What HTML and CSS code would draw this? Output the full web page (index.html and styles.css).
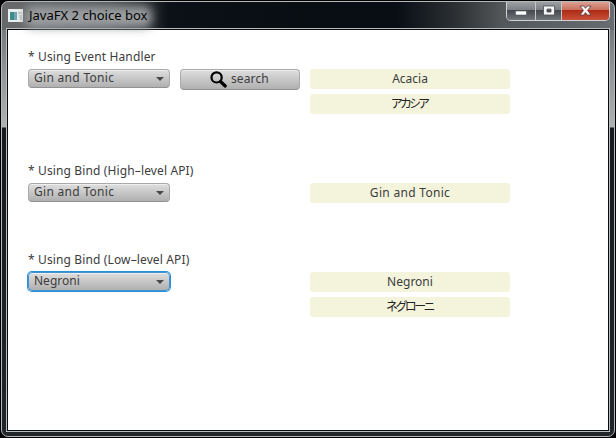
FILE: index.html
```html
<!DOCTYPE html>
<html lang="en">
<head>
<meta charset="utf-8">
<title>JavaFX 2 choice box</title>
<link rel="stylesheet" href="styles.css">
</head>
<body>
<div class="window">
  <header class="titlebar">
    <svg class="app-icon" width="15" height="13" viewBox="0 0 15 13"><path fill="#e9eeee" d="M0 0h15v13H0z"/><path fill="#438b8b" d="M2 3h6v8H2z"/><path fill="#72a7ac" d="M6 3h3v8H6z"/><path fill="#c8cdd0" d="M10 3h4v2h-4zM11 6h3v5h-2z"/></svg>
    <span class="title">JavaFX 2 choice box</span>
    <div class="controls">
      <span class="control minimize"><svg width="12" height="6" viewBox="0 0 12 6"><path d="M.5 1h11v4H.5z" fill="#fff" stroke="#53565a" stroke-width=".6"/></svg></span>
      <span class="control maximize"><svg width="12" height="11" viewBox="0 0 12 11"><path d="M.5 1h11v9H.5zM4 4v3h4V4z" fill="#f5f5f5" fill-rule="evenodd" stroke="#4b4e52" stroke-width=".8"/></svg></span>
      <span class="control close"><svg width="13" height="11" viewBox="0 0 13 11"><path d="M1 1h3.7l1.8 2.3L8.3 1H12L8.6 5.4 12 10H8.3L6.5 7.6 4.7 10H1l3.4-4.6z" fill="#f7f7f7" stroke="#5a3b3c" stroke-width=".8"/></svg></span>
    </div>
  </header>
  <main class="client">
    <section class="group first">
      <div class="label">* Using Event Handler</div>
      <div class="row">
        <div class="choice"><span class="gin">Gin and Tonic</span><i class="arrow"></i></div>
        <div class="search"><svg width="17" height="17" viewBox="0 0 17 17" fill="none" stroke="#000"><circle cx="6.6" cy="6.4" r="5.1" stroke-width="2.2"/><path d="m10.5 10.5 4.7 4.5" stroke-width="3.2" stroke-linecap="round"/></svg><span>search</span></div>
        <div class="results"><div class="result"><span>Acacia</span></div><div class="result kana"><span>アカシア</span></div></div>
      </div>
    </section>
    <section class="group second">
      <div class="label">* Using Bind (High–level API)</div>
      <div class="row">
        <div class="choice"><span class="gin">Gin and Tonic</span><i class="arrow"></i></div>
        <div class="results"><div class="result"><span class="gin">Gin and Tonic</span></div></div>
      </div>
    </section>
    <section class="group third">
      <div class="label">* Using Bind (Low–level API)</div>
      <div class="row">
        <div class="choice focused"><span>Negroni</span><i class="arrow"></i></div>
        <div class="results"><div class="result"><span>Negroni</span></div><div class="result kana long"><span>ネグローニ</span></div></div>
      </div>
    </section>
  </main>
</div>
</body>
</html>
```
FILE: styles.css
```css
* { box-sizing: border-box; }
body { margin: 0; padding: 1px; width: 616px; height: 438px; overflow: hidden; background: #000; font: 12px/18px "Noto Sans", "Noto Sans CJK JP", sans-serif; color: #3c3c3c; }
svg { display: block; flex: none; }
.window {
  width: 614px; height: 436px; padding: 0 4px 4px; border: 1px solid #b4b9bc; border-radius: 7px;
  background:
    linear-gradient(90deg, #66686a 0, #66686a 20px, #4b4e51 110px, #252a2e 150px, #0c1117 166px, #080e12 300px, #090e15 395px, #2d3134 455px, #53575a 500px, #686c70 612px) 0 0 / 100% 28px no-repeat,
    linear-gradient(#65686b 0, #929597 70px, #b0b1b1 125px, #171b1f 126px, #20262a 100%);
}
.titlebar { display: flex; height: 26px; padding-left: 2px; }
.app-icon { margin-top: 7px; }
.title { position: relative; z-index: 0; margin: 4px 0 0 6px; color: #000; font-size: 13px; letter-spacing: .01px; white-space: nowrap; }
.title::before { content: ""; position: absolute; z-index: -1; inset: 0 -5px 0 -4px; border-radius: 8px; background: #9a9d9f; filter: blur(5px); }
.controls { display: flex; margin-left: auto; margin-right: 0; width: 104px; height: 19px; border: 1px solid #d0d2d4; border-top: 0; border-radius: 0 0 5px 5px; overflow: hidden; }
.control { display: flex; align-items: center; justify-content: center; width: 29px; border-right: 1px solid #c5c8ca; background: linear-gradient(#9da0a3, #7b7f83 45%, #45494e 47%, #707579); }
.control svg { margin-top: -2px; }
.control.maximize { width: 26px; }
.control.minimize svg { margin-top: 3px; }
.control.close { flex: 1; border: 0; background: linear-gradient(#dda094, #c66e5b 45%, #ae2b15 47%, #c9513b); }
.client { width: 604px; height: 404px; border: 1px solid #b9bdc0; outline: 1px solid #080b0e; outline-offset: -2px; background: #fff; padding: 19px 20px 0 21px; }
.label { height: 21px; white-space: nowrap; letter-spacing: .13px; }
.row { display: flex; align-items: flex-start; }
.choice { display: flex; flex: none; align-items: center; justify-content: space-between; width: 142px; height: 19px; padding: 0 5px 1px; border: 1px solid #a9a9a9; border-bottom-color: #929292; border-radius: 4px; background: linear-gradient(#dedede, #b0b0b0); box-shadow: inset 0 1px #eee; white-space: nowrap; }
.arrow { border: solid transparent; border-width: 4px 4px 0; border-top-color: #484848; margin-top: 2px; }
.search { display: flex; flex: none; align-items: center; gap: 4px; width: 120px; height: 21px; margin-left: 10px; padding: 0 0 1px 29px; border: 1px solid #a9a9a9; border-bottom-color: #929292; border-radius: 4px; background: linear-gradient(#dedede, #b0b0b0); box-shadow: inset 0 1px #eee; letter-spacing: .12px; }
.results { display: grid; flex: none; gap: 5px; width: 200px; margin-left: auto; margin-right: 79px; }
.result { height: 20px; border-radius: 3px; background: #f4f4dc; text-align: center; line-height: 20px; white-space: nowrap; }
.kana { color: #222; padding-right: 2px; letter-spacing: -2.9px; }
.kana.long { padding-right: 1px; letter-spacing: -2.6px; }
.focused { border-color: #4192cf; box-shadow: 0 0 0 1px #2493da, inset 0 1px #eee; }
.group { height: 114px; }
.group.second { height: 89px; }
.gin { letter-spacing: .3px; }
```
